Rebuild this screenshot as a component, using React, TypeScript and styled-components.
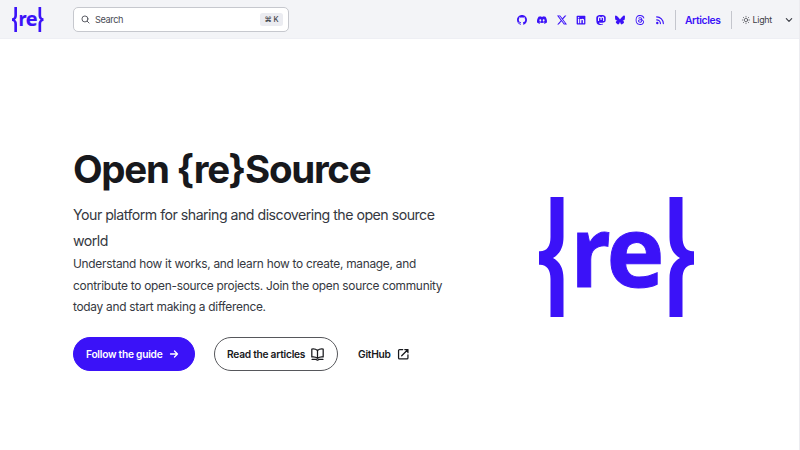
import React from "react";
import styled, { createGlobalStyle } from "styled-components";
import { SiGithub, SiDiscord, SiX, SiMastodon, SiBluesky, SiThreads } from "react-icons/si";
import { FaLinkedin } from "react-icons/fa";

const accent = "#3b12f8";

const GlobalStyle = createGlobalStyle`
  *, *::before, *::after { box-sizing: border-box; }
  body {
    margin: 0;
    background: #fff;
    color: #17181c;
    font-family: Inter, "Liberation Sans", sans-serif;
    overflow: hidden;
  }
  svg { display: block; flex: none; overflow: visible; }
  h1, p { margin: 0; }
`;

const Page = styled.div`
  height: 450px;
  display: flex;
  flex-direction: column;
  border-right: 1px solid #ececf0;
`;

const Header = styled.header`
  height: 39px;
  flex: none;
  display: flex;
  align-items: center;
  padding: 1px 6px 0 12px;
  background: #f3f4f7;
  border-bottom: 1px solid #eeeff4;
`;

const Brand = styled.a`
  width: 61px;
`;

const Search = styled.button`
  width: 215.5px;
  height: 25px;
  display: flex;
  align-items: center;
  gap: 5px;
  padding: 0 5px 0 7px;
  border: 1px solid #c6c8ce;
  border-radius: 5px;
  background: #fff;
  color: #4a4c55;
  font: 400 9.2px Inter, sans-serif;
`;

const SearchLabel = styled.span`
  letter-spacing: -0.4px;
`;

const Shortcut = styled.kbd`
  margin-left: auto;
  height: 13px;
  display: flex;
  align-items: center;
  gap: 2px;
  padding: 0 4px;
  border-radius: 2.5px;
  background: #ebecf1;
  color: #3c3e46;
  font: 500 7.4px Inter, sans-serif;
  letter-spacing: -0.2px;
`;

const Nav = styled.nav`
  margin-left: auto;
  display: flex;
  align-items: center;
`;

const Socials = styled.div`
  display: flex;
  gap: 9.6px;
  margin-right: 10px;
  color: ${accent};
`;

const Divider = styled.span<{ $tall?: boolean }>`
  width: 1px;
  height: ${(p) => (p.$tall ? 20 : 18)}px;
  background: #c4c6cd;
`;

const NavLink = styled.a`
  width: 55.5px;
  padding-right: 1px;
  text-align: center;
  color: ${accent};
  font-size: 10.3px;
  font-weight: 600;
  letter-spacing: -0.35px;
`;

const ThemeSelect = styled.button`
  width: 51px;
  display: flex;
  align-items: center;
  gap: 2.5px;
  margin-left: 10px;
  padding: 0;
  border: 0;
  background: none;
  color: #3c3e46;
  font: 400 8.9px Inter, sans-serif;
  letter-spacing: -0.25px;
  svg:last-child { margin-left: auto; }
`;

const Hero = styled.main`
  flex: 1;
  display: grid;
  grid-template-columns: 380px 155px;
  column-gap: 86.3px;
  padding: 107px 0 0 73px;
`;

const Title = styled.h1`
  font-size: 38.5px;
  line-height: 46px;
  font-weight: 650;
  letter-spacing: -1.32px;
  white-space: nowrap;
`;

const Tagline = styled.p`
  margin-top: 10px;
  font-size: 14.2px;
  line-height: 25.5px;
  letter-spacing: -0.52px;
  color: #353841;
`;

const Description = styled.p`
  font-size: 11.9px;
  line-height: 21.5px;
  letter-spacing: -0.27px;
  color: #353841;
`;

const Actions = styled.div`
  display: flex;
  align-items: center;
  margin-top: 19.5px;
`;

const Action = styled.a<{ $kind: "primary" | "secondary" | "minimal" }>`
  height: 34px;
  display: flex;
  align-items: center;
  gap: 6px;
  flex: none;
  white-space: nowrap;
  font-size: 10.2px;
  font-weight: 600;
  letter-spacing: -0.25px;
  border-radius: 17px;
  border: ${(p) => (p.$kind === "minimal" ? "0" : "1px solid")};
  border-color: ${(p) => (p.$kind === "primary" ? accent : "#56575b")};
  background: ${(p) => (p.$kind === "primary" ? accent : "transparent")};
  color: ${(p) => (p.$kind === "primary" ? "#fff" : "#17181c")};
  padding: 0 12px;
  width: ${(p) => (p.$kind === "primary" ? "121.5px" : p.$kind === "secondary" ? "123.5px" : "auto")};
  margin-right: ${(p) => (p.$kind === "primary" ? 19.5 : 8.5)}px;
`;

const Emblem = styled.div`
  padding-top: 51px;
`;

const brace =
  "M11.5 0H24.5V40C24.5 50 21 57 14 61C21 65 24.5 71 24.5 82V120H11.5V82C11.5 73 8 67.7 1 67.7H0V54.3H1C8 54.3 11.5 49 11.5 40Z";

const LogoLetter = styled.text`
  font: 700 98px "Open Sans", "Noto Sans", sans-serif;
  stroke: ${accent};
  stroke-width: 1px;
`;

function Logo({ width, height }: { width: number; height: number }) {
  return (
    <svg width={width} height={height} viewBox="0 0 155 120" preserveAspectRatio="none" fill={accent}>
      <path d={brace} />
      <LogoLetter transform="translate(31.8 90.4) scale(0.9 1)">r</LogoLetter>
      <LogoLetter x="67.4" y="90.4">e</LogoLetter>
      <path d={brace} transform="translate(155 0) scale(-1 1)" />
    </svg>
  );
}

function Stroke({ size, width = 2, children }: { size: number; width?: number; children: React.ReactNode }) {
  return (
    <svg width={size} height={size} viewBox="0 0 24 24" fill="none" stroke="currentColor" strokeWidth={width} strokeLinecap="round" strokeLinejoin="round">
      {children}
    </svg>
  );
}

function RssIcon({ size }: { size: number }) {
  return (
    <Stroke size={size} width={2.8}>
      <circle cx="5.5" cy="19" r="1.5" />
      <path d="M4 11.5a9 9 0 0 1 9 9M4 4.5a16 16 0 0 1 16 16" />
    </Stroke>
  );
}

const socials = [SiGithub, SiDiscord, SiX, FaLinkedin, SiMastodon, SiBluesky, SiThreads, RssIcon];

export default function App() {
  return (
    <>
      <GlobalStyle />
      <Page>
        <Header>
          <Brand><Logo width={31.5} height={25} /></Brand>
          <Search>
            <Stroke size={9} width={2.4}><circle cx="10.5" cy="10.5" r="8" /><path d="m16.5 16.5 5 5" /></Stroke>
            <SearchLabel>Search</SearchLabel>
            <Shortcut><span>⌘</span><span>K</span></Shortcut>
          </Search>
          <Nav>
            <Socials>{socials.map((Icon, i) => <Icon key={i} size={10} />)}</Socials>
            <Divider $tall />
            <NavLink>Articles</NavLink>
            <Divider />
            <ThemeSelect>
              <Stroke size={8}><circle cx="12" cy="12" r="5" /><path d="M12 1v2M12 21v2M1 12h2M21 12h2M4 4l1.5 1.5M18.5 18.5 20 20M4 20l1.5-1.5M18.5 5.5 20 4" /></Stroke>
              Light
              <Stroke size={8} width={3.5}><path d="m4 8 8 8 8-8" /></Stroke>
            </ThemeSelect>
          </Nav>
        </Header>
        <Hero>
          <div>
            <Title>Open {"{re}"}Source</Title>
            <Tagline>Your platform for sharing and discovering the open source world</Tagline>
            <Description>
              Understand how it works, and learn how to create, manage, and contribute to open-source projects. Join the open source community today and start making a difference.
            </Description>
            <Actions>
              <Action $kind="primary">
                Follow the guide
                <Stroke size={12} width={2.6}><path d="M5 12h14M13 6l6 6-6 6" /></Stroke>
              </Action>
              <Action $kind="secondary">
                Read the articles
                <Stroke size={13} width={2.3}><path d="M12 4.5C9 2 5 1.5 1.5 2v14.5c3.5-.5 7.5 0 10.5 2.5 3-2.5 7-3 10.5-2.5V2c-3.5-.5-7.5 0-10.5 2.5zM12 4.5V19M2 21h7l3 1.5 3-1.5h7" /></Stroke>
              </Action>
              <Action $kind="minimal">
                GitHub
                <Stroke size={12.5} width={2.4}><path d="M11 3H5a2 2 0 0 0-2 2v14a2 2 0 0 0 2 2h14a2 2 0 0 0 2-2v-6M15 3h6v6M21 3 9 15" /></Stroke>
              </Action>
            </Actions>
          </div>
          <Emblem><Logo width={155} height={120} /></Emblem>
        </Hero>
      </Page>
    </>
  );
}
